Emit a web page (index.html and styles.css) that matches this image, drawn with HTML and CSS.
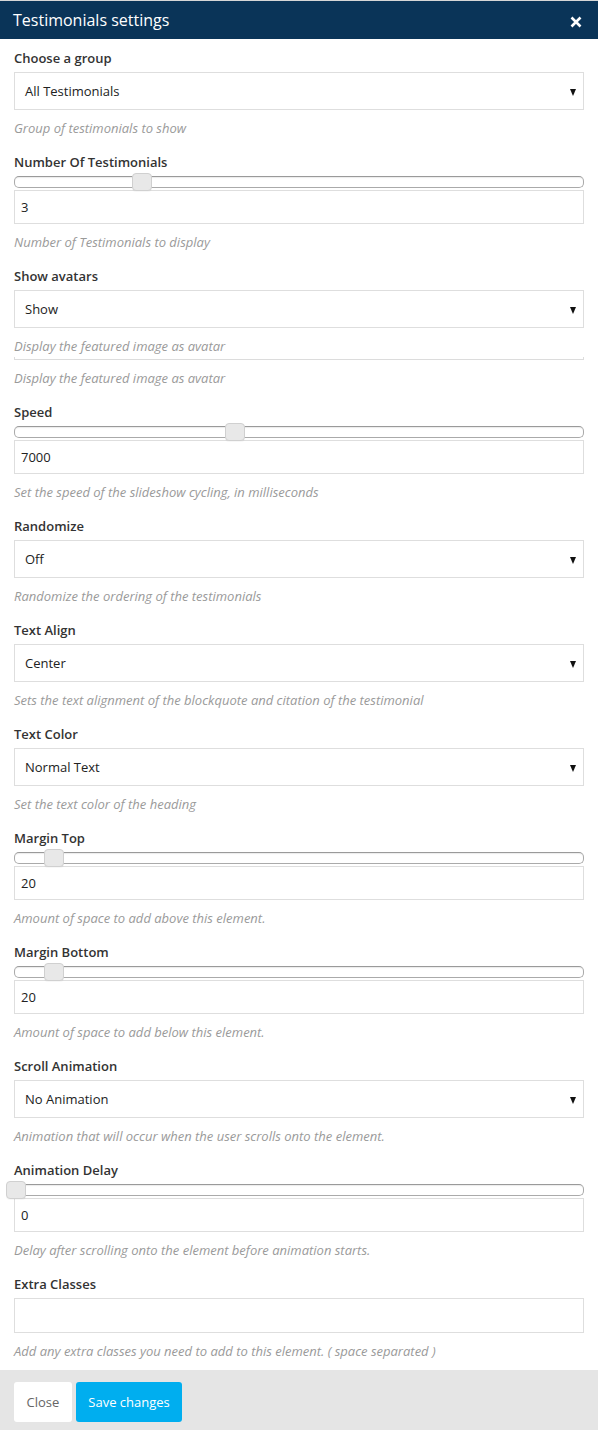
FILE: index.html
```html
<!DOCTYPE html>
<html>
<head>
<meta charset="utf-8">
<link rel="stylesheet" href="styles.css">
</head>
<body>
<div class="modal">
  <div class="modal-header">
    <h1 class="modal-title">Testimonials settings</h1>
    <button class="close-x" aria-label="Close">
      <svg width="12" height="12" viewBox="0 0 12 12"><path d="M1.5 1.5 L10.5 10.5 M10.5 1.5 L1.5 10.5" stroke="#fff" stroke-width="2.6" stroke-linecap="butt"/></svg>
    </button>
  </div>
  <div class="modal-body">
    <div class="group">
      <label class="label">Choose a group</label>
      <div class="select"><span>All Testimonials</span></div>
      <p class="help">Group of testimonials to show</p>
    </div>
    <div class="group">
      <label class="label">Number Of Testimonials</label>
      <div class="slider"><span class="thumb" style="left:22.2%"></span></div>
      <div class="input">3</div>
      <p class="help">Number of Testimonials to display</p>
    </div>
    <div class="group">
      <label class="label">Show avatars</label>
      <div class="select"><span>Show</span></div>
      <p class="help">Display the featured image as avatar</p>
      <div class="flat-input"></div>
      <p class="help">Display the featured image as avatar</p>
    </div>
    <div class="group">
      <label class="label">Speed</label>
      <div class="slider"><span class="thumb" style="left:38.6%"></span></div>
      <div class="input">7000</div>
      <p class="help">Set the speed of the slideshow cycling, in milliseconds</p>
    </div>
    <div class="group">
      <label class="label">Randomize</label>
      <div class="select"><span>Off</span></div>
      <p class="help">Randomize the ordering of the testimonials</p>
    </div>
    <div class="group">
      <label class="label">Text Align</label>
      <div class="select"><span>Center</span></div>
      <p class="help">Sets the text alignment of the blockquote and citation of the testimonial</p>
    </div>
    <div class="group">
      <label class="label">Text Color</label>
      <div class="select"><span>Normal Text</span></div>
      <p class="help">Set the text color of the heading</p>
    </div>
    <div class="group">
      <label class="label">Margin Top</label>
      <div class="slider"><span class="thumb" style="left:6.67%"></span></div>
      <div class="input">20</div>
      <p class="help">Amount of space to add above this element.</p>
    </div>
    <div class="group">
      <label class="label">Margin Bottom</label>
      <div class="slider"><span class="thumb" style="left:6.67%"></span></div>
      <div class="input">20</div>
      <p class="help">Amount of space to add below this element.</p>
    </div>
    <div class="group">
      <label class="label">Scroll Animation</label>
      <div class="select"><span>No Animation</span></div>
      <p class="help">Animation that will occur when the user scrolls onto the element.</p>
    </div>
    <div class="group">
      <label class="label">Animation Delay</label>
      <div class="slider"><span class="thumb" style="left:0%"></span></div>
      <div class="input">0</div>
      <p class="help">Delay after scrolling onto the element before animation starts.</p>
    </div>
    <div class="group last">
      <label class="label">Extra Classes</label>
      <div class="input tall"></div>
      <p class="help">Add any extra classes you need to add to this element. ( space separated )</p>
    </div>
  </div>
  <div class="modal-footer">
    <button class="btn btn-default">Close</button>
    <button class="btn btn-primary">Save changes</button>
  </div>
</div>
</body>
</html>
```

FILE: styles.css
```css
* { box-sizing: border-box; }
html, body { margin: 0; padding: 0; background: #fff; }
body {
  font-family: "Open Sans", "Noto Sans", sans-serif;
  color: #333;
  width: 598px;
}
.modal { border-top: 1px solid #d6d6d6; }
.modal-header {
  background: #0a3458;
  height: 38px;
  display: flex;
  align-items: center;
  justify-content: space-between;
  padding: 0 16px 0 13px;
}
.modal-title {
  margin: 0;
  color: #fff;
  font-size: 16px;
  font-weight: 400;
  line-height: 24px;
}
.close-x {
  background: none;
  border: 0;
  padding: 0;
  display: flex;
  margin-top: 4px;
}
.modal-body { padding: 10px 14px 10px; }
.group { margin-bottom: 16px; }
.group.last { margin-bottom: 0; }
.label {
  display: block;
  font-size: 13px;
  font-weight: 600;
  line-height: 18px;
  margin-bottom: 5px;
  color: #333;
}
.select {
  position: relative;
  height: 38px;
  border: 1px solid #dedede;
  background: #fff;
  display: flex;
  align-items: center;
  padding: 0 10px;
  font-size: 13px;
  color: #222;
}
.select::after {
  content: "";
  position: absolute;
  right: 7px;
  top: 16px;
  border-left: 3.5px solid transparent;
  border-right: 3.5px solid transparent;
  border-top: 7px solid #111;
}
.help {
  margin: 9px 0 0;
  font-size: 13px;
  font-style: italic;
  line-height: 18px;
  color: #9a9a9a;
}
.flat-input {
  margin-top: 2px;
  height: 3px;
  border: 1px solid #dcdcdc;
  border-top: 0;
}
.flat-input + .help { margin-top: 9px; }
.slider {
  position: relative;
  height: 12px;
  margin-bottom: 2px;
  border: 1px solid #aaa;
  border-top-color: #9a9a9a;
  border-radius: 5px;
  background: #fff;
  box-shadow: inset 0 1px 1px rgba(0,0,0,0.08);
}
.thumb {
  position: absolute;
  top: -4px;
  width: 20px;
  height: 18px;
  margin-left: -9px;
  background: #e8e8e8;
  border: 1px solid #d0d0d0;
  border-radius: 4px;
  box-shadow: 0 1px 0 rgba(0,0,0,0.03);
}
.input {
  height: 34px;
  border: 1px solid #dedede;
  background: #fff;
  display: flex;
  align-items: center;
  padding: 0 6px;
  font-size: 13px;
  color: #222;
}
.input.tall { height: 35px; }
.modal-footer {
  background: #e5e5e5;
  padding: 12px 14px 8px;
  display: flex;
  gap: 4px;
}
.btn {
  height: 40px;
  border: 0;
  border-radius: 3px;
  font-family: "Open Sans", "Noto Sans", sans-serif;
  font-size: 13px;
  padding: 0 12.5px;
}
.btn-default { background: #fff; color: #666; }
.btn-primary { background: #00aeef; color: #fff; }
```
